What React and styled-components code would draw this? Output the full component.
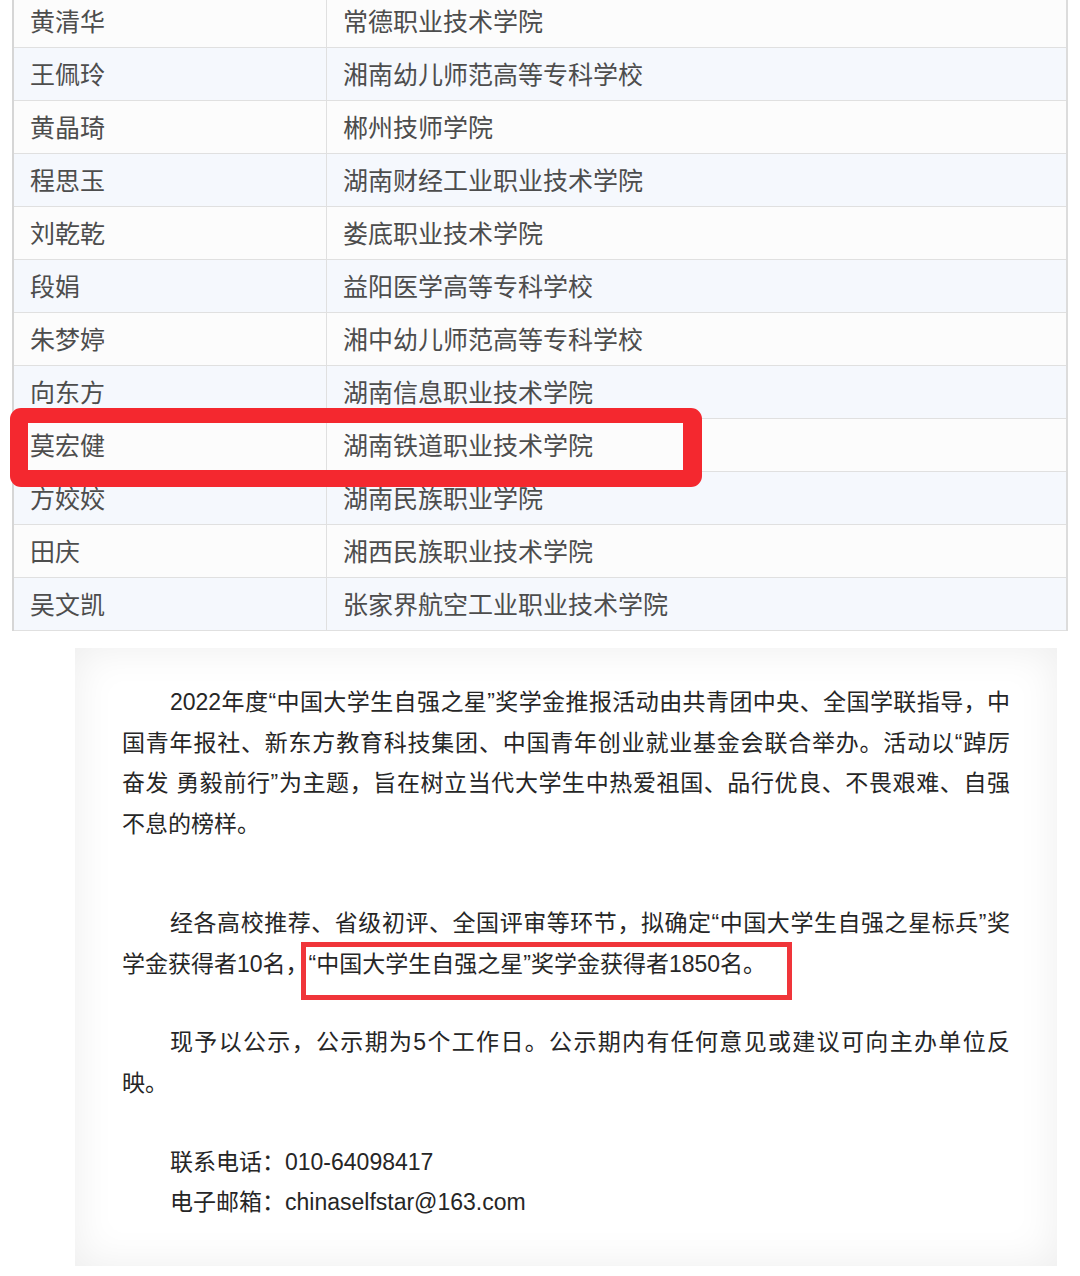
import React from "react";
import styled, { createGlobalStyle } from "styled-components";

const rows = [
  ["黄清华", "常德职业技术学院"],
  ["王佩玲", "湘南幼儿师范高等专科学校"],
  ["黄晶琦", "郴州技师学院"],
  ["程思玉", "湖南财经工业职业技术学院"],
  ["刘乾乾", "娄底职业技术学院"],
  ["段娟", "益阳医学高等专科学校"],
  ["朱梦婷", "湘中幼儿师范高等专科学校"],
  ["向东方", "湖南信息职业技术学院"],
  ["莫宏健", "湖南铁道职业技术学院", true],
  ["方姣姣", "湖南民族职业学院"],
  ["田庆", "湘西民族职业技术学院"],
  ["吴文凯", "张家界航空工业职业技术学院"],
];

function App() {
  return (
    <Page>
      <Global />
      <Table>
        {rows.map(([name, school, marked], i) => (
          <Row key={name} $alt={i % 2 === 1}>
            <NameCell>{name}</NameCell>
            <SchoolCell>{school}</SchoolCell>
            {marked && <RowMark />}
          </Row>
        ))}
      </Table>

      <Notice>
        <Para>
          <Line $first>
            2022年度“中国大学生自强之星”奖学金推报活动由共青团中央、全国学联指导，中
          </Line>
          <Line>
            国青年报社、新东方教育科技集团、中国青年创业就业基金会联合举办。活动以“踔厉
          </Line>
          <Line>
            奋发 勇毅前行”为主题，旨在树立当代大学生中热爱祖国、品行优良、不畏艰难、自强
          </Line>
          <Line $last>不息的榜样。</Line>
        </Para>

        <Para $gap="58px">
          <Line $first>
            经各高校推荐、省级初评、全国评审等环节，拟确定“中国大学生自强之星标兵”奖
          </Line>
          <Line $last>
            学金获得者10名，
            <Marked>“中国大学生自强之星”奖学金获得者1850名。</Marked>
          </Line>
        </Para>

        <Para $gap="38px">
          <Line $first>
            现予以公示，公示期为5个工作日。公示期内有任何意见或建议可向主办单位反
          </Line>
          <Line $last>映。</Line>
        </Para>

        <Para $gap="38px">
          <Line $first $last>联系电话：010-64098417</Line>
          <Line $first $last>电子邮箱：chinaselfstar@163.com</Line>
        </Para>
      </Notice>
    </Page>
  );
}

export default App;

const Global = createGlobalStyle`
  body {
    margin: 0;
    background: #ffffff;
  }
`;

const Page = styled.div`
  width: 1080px;
  height: 1276px;
  overflow: hidden;
  background: #ffffff;
`;

const Table = styled.div`
  margin: -5px 0 0 12px;
  width: 1056px;
  border-left: 2px solid #d6d6d6;
  border-right: 2px solid #dcdcdc;
  box-sizing: border-box;
  font-family: "Noto Sans CJK SC", "Liberation Sans", sans-serif;
  font-size: 25px;
  color: #4d4d4d;
`;

const Row = styled.div`
  position: relative;
  display: grid;
  grid-template-columns: 313px 1fr;
  height: 53px;
  box-sizing: border-box;
  border-bottom: 1px solid #e0e0e0;
  background: ${(p) => (p.$alt ? "#f5f8fd" : "#fcfcfc")};
`;

const NameCell = styled.div`
  display: flex;
  align-items: center;
  padding: 0 0 2px 16px;
  border-right: 1px solid #e0e0e0;
  line-height: 1;
`;

const SchoolCell = styled.div`
  display: flex;
  align-items: center;
  padding: 0 0 2px 16px;
  line-height: 1;
`;

const RowMark = styled.div`
  position: absolute;
  z-index: 2;
  top: -11px;
  left: -4px;
  width: 692px;
  height: 79px;
  box-sizing: border-box;
  border-style: solid;
  border-color: #f4282f;
  border-width: 15px 19px 17px 18px;
  border-radius: 11px;
  pointer-events: none;
`;

const Notice = styled.div`
  margin: 17px 0 0 75px;
  width: 982px;
  height: 618px;
  box-sizing: border-box;
  padding: 34px 47px 0 47px;
  background: #ffffff;
  box-shadow: inset 0 0 42px rgba(0, 0, 0, 0.075);
  font-family: "Liberation Sans", "Noto Sans CJK SC", sans-serif;
  font-size: 23px;
  color: #262626;
`;

const Para = styled.div`
  margin-top: ${(p) => p.$gap || "0"};
  line-height: 40.7px;
`;

const Line = styled.div`
  text-align: justify;
  text-align-last: ${(p) => (p.$last ? "left" : "justify")};
  text-indent: ${(p) => (p.$first ? "48px" : "0")};
  white-space: nowrap;
`;

const Marked = styled.span`
  position: relative;
  display: inline-block;
  text-indent: 0;

  &::after {
    content: "";
    position: absolute;
    top: -2px;
    left: -8px;
    width: 491px;
    height: 58px;
    box-sizing: border-box;
    border: 5px solid #f0353a;
    pointer-events: none;
  }
`;
